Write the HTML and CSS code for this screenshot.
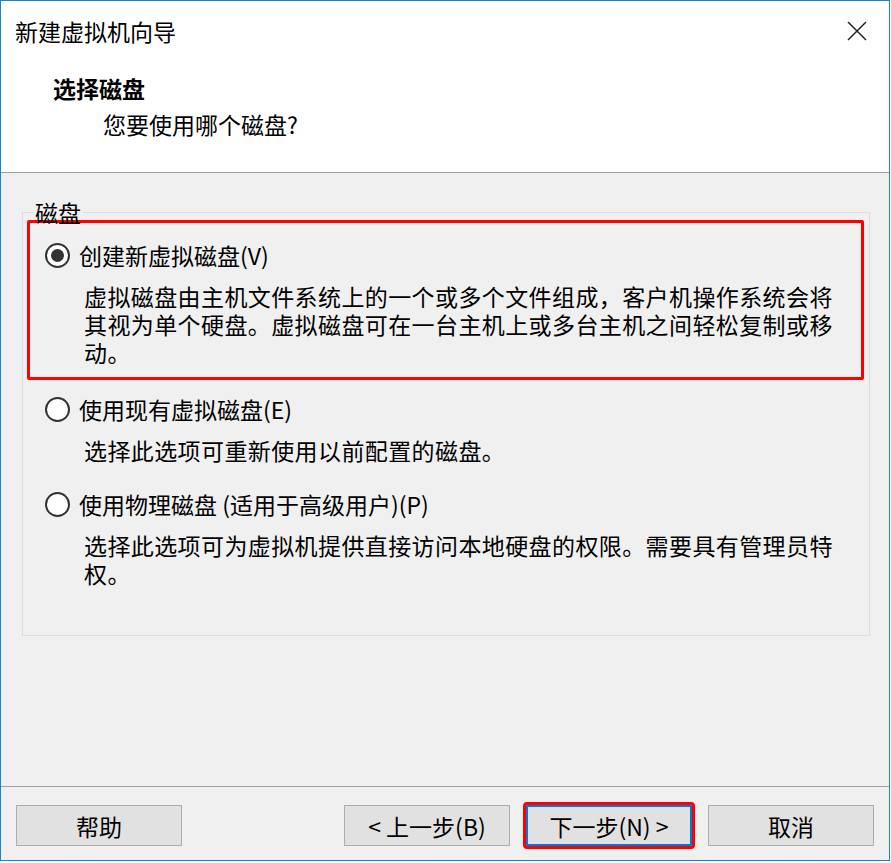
FILE: index.html
```html
<!DOCTYPE html>
<html>
<head>
    <meta charset="utf-8">
    <title>新建虚拟机向导</title>
    <link rel="stylesheet" href="styles.css">
</head>
<body>
    <div class="window">
        <div class="top">
            <div class="titlebar">
                <span class="title">新建虚拟机向导</span>
                <svg class="close" width="20" height="20" viewBox="0 0 20 20">
                    <path d="M1 1 L19 19 M19 1 L1 19" stroke="#222" stroke-width="1.5" fill="none"/>
                </svg>
            </div>
            <div class="header">
                <div class="heading">选择磁盘</div>
                <div class="subheading">您要使用哪个磁盘?</div>
            </div>
        </div>

        <div class="main">
            <fieldset class="group">
                <legend>磁盘</legend>

                <div class="option marked">
                    <div class="option-row">
                        <span class="radio checked"></span>
                        <span>创建新虚拟磁盘(V)</span>
                    </div>
                    <div class="desc">虚拟磁盘由主机文件系统上的一个或多个文件组成，客户机操作系统会将<br>其视为单个硬盘。虚拟磁盘可在一台主机上或多台主机之间轻松复制或移<br>动。</div>
                </div>

                <div class="option">
                    <div class="option-row">
                        <span class="radio"></span>
                        <span>使用现有虚拟磁盘(E)</span>
                    </div>
                    <div class="desc">选择此选项可重新使用以前配置的磁盘。</div>
                </div>

                <div class="option">
                    <div class="option-row">
                        <span class="radio"></span>
                        <span>使用物理磁盘 (适用于高级用户)(P)</span>
                    </div>
                    <div class="desc">选择此选项可为虚拟机提供直接访问本地硬盘的权限。需要具有管理员特<br>权。</div>
                </div>
            </fieldset>
        </div>

        <div class="footer">
            <button class="btn">帮助</button>
            <div class="nav">
                <button class="btn">&lt; 上一步(B)</button>
                <button class="btn default marked-btn">下一步(N) &gt;</button>
                <button class="btn">取消</button>
            </div>
        </div>
    </div>
</body>
</html>
```

FILE: styles.css
```css
body {
    margin: 0;
    background: #fff;
    font-family: "Noto Sans CJK SC", "Liberation Sans", sans-serif;
    font-size: 23px;
    color: #000;
}
.window {
    width: 890px;
    height: 861px;
    box-sizing: border-box;
    border: 1px solid #1883d7;
    display: flex;
    flex-direction: column;
    background: #f0f0f0;
}
.top {
    height: 171px;
    background: #fff;
    border-bottom: 1px solid #a0a0a0;
}
.titlebar {
    height: 60px;
    padding: 0 22px 0 14px;
    display: flex;
    align-items: center;
    justify-content: space-between;
}
.title {
    line-height: 30px;
}
.close {
    display: block;
}
.header {
    margin-top: 12px;
    padding-left: 52px;
}
.heading {
    font-weight: bold;
    line-height: 30px;
}
.subheading {
    margin-top: 6px;
    padding-left: 50px;
    line-height: 30px;
}
.main {
    flex: 1;
    padding: 31px 0 0 21px;
}
.group {
    width: 848px;
    box-sizing: border-box;
    margin: 0;
    padding: 0 0 37px 0;
    border: 1px solid #dcdcdc;
}
.group legend {
    margin-left: 10px;
    padding: 0 2px;
    line-height: 16px;
}
.option {
    margin: 0 5px 0 4px;
    border: 3px solid transparent;
    padding: 11px 15px 8px;
}
.option.marked {
    border-color: #ff0000;
    border-radius: 2px;
    padding-top: 17px;
    padding-bottom: 11px;
}
.option-row {
    display: flex;
    align-items: center;
    gap: 9px;
    line-height: 30px;
}
.radio {
    width: 25px;
    height: 25px;
    box-sizing: border-box;
    border: 2px solid #333;
    border-radius: 50%;
    background: #fff;
    display: flex;
    align-items: center;
    justify-content: center;
}
.radio.checked::after {
    content: "";
    width: 13px;
    height: 13px;
    border-radius: 50%;
    background: #333;
}
.desc {
    margin-top: 12px;
    padding-left: 39px;
    line-height: 28px;
    letter-spacing: 0.4px;
    white-space: nowrap;
}
.footer {
    height: 55px;
    border-top: 1px solid #a0a0a0;
    padding: 18px 15px 0 15px;
    display: flex;
    justify-content: space-between;
    align-items: flex-start;
}
.nav {
    display: flex;
    gap: 16px;
}
.btn {
    width: 166px;
    height: 41px;
    box-sizing: border-box;
    border: 1px solid #adadad;
    background: #e1e1e1;
    font-family: inherit;
    font-size: 23px;
    color: #000;
    padding: 0;
    line-height: 38px;
}
.btn.default {
    border: 2px solid #0078d7;
}
.marked-btn {
    outline: 3px solid #ff0000;
    border-radius: 1px;
}
```
